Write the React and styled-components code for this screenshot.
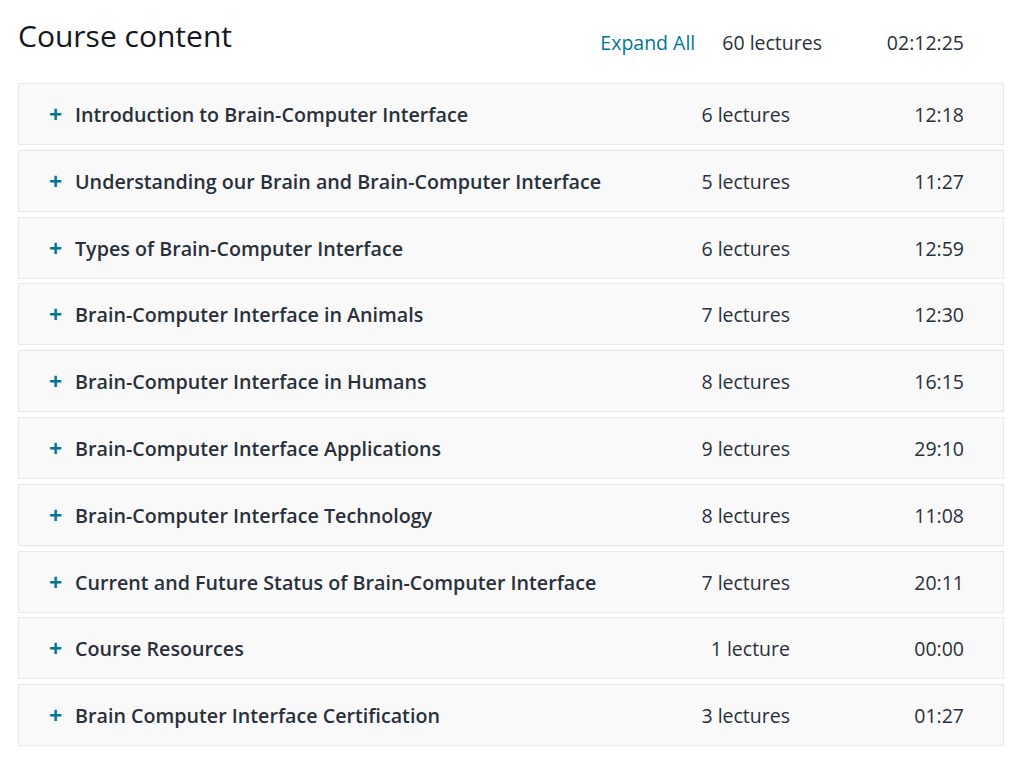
import React from 'react'
import styled, { createGlobalStyle } from 'styled-components'

const GlobalStyle = createGlobalStyle`
    body {
        margin: 0;
        background: #fff;
        font-family: "Open Sans", "Noto Sans", sans-serif;
        color: #29303b;
    }
`

const Page = styled.div`
    width: 986px;
    padding: 0 20px 0 18px;
`

const Header = styled.div`
    display: flex;
    align-items: flex-end;
    height: 83px;
    box-sizing: border-box;
    padding: 0 40px 27px 0;
`

const Title = styled.h2`
    margin: 0 auto 0 0;
    font-size: 30px;
    font-weight: 500;
    color: #14171c;
    line-height: 1;
    align-self: flex-start;
    padding-top: 21px;
`

const ExpandAll = styled.a`
    font-size: 19.5px;
    color: #007791;
    cursor: pointer;
    margin-right: 27px;
`

const Meta = styled.span`
    font-size: 19.5px;
    color: #29303b;
    text-align: right;
    width: ${props => props.width || 'auto'};
`

const List = styled.div`
    display: flex;
    flex-direction: column;
    gap: 4.8px;
`

const Row = styled.div`
    display: grid;
    grid-template-columns: 1fr auto 174px;
    align-items: center;
    height: 62px;
    box-sizing: border-box;
    background: #f9f9f9;
    border: 1px solid #e8e9eb;
    padding: 1px 39px 0 30px;
    cursor: pointer;
`

const Name = styled.div`
    display: flex;
    align-items: center;
    gap: 13px;
    font-size: 19.7px;
    font-weight: 600;
    color: #29303b;
`

const Plus = styled.span`
    color: #007791;
    font-size: 23px;
    font-weight: 700;
    width: 13px;
    line-height: 1;
    text-align: center;
`

const Cell = styled.div`
    font-size: 19.5px;
    color: #29303b;
    text-align: right;
`

const sections = [
    ['Introduction to Brain-Computer Interface', '6 lectures', '12:18'],
    ['Understanding our Brain and Brain-Computer Interface', '5 lectures', '11:27'],
    ['Types of Brain-Computer Interface', '6 lectures', '12:59'],
    ['Brain-Computer Interface in Animals', '7 lectures', '12:30'],
    ['Brain-Computer Interface in Humans', '8 lectures', '16:15'],
    ['Brain-Computer Interface Applications', '9 lectures', '29:10'],
    ['Brain-Computer Interface Technology', '8 lectures', '11:08'],
    ['Current and Future Status of Brain-Computer Interface', '7 lectures', '20:11'],
    ['Course Resources', '1 lecture', '00:00'],
    ['Brain Computer Interface Certification', '3 lectures', '01:27'],
]

export default function App() {
    return (
        <Page>
            <GlobalStyle />
            <Header>
                <Title>Course content</Title>
                <ExpandAll>Expand All</ExpandAll>
                <Meta>60 lectures</Meta>
                <Meta width='142px'>02:12:25</Meta>
            </Header>
            <List>
                {sections.map(([name, lectures, time]) => (
                    <Row key={name}>
                        <Name><Plus>+</Plus>{name}</Name>
                        <Cell>{lectures}</Cell>
                        <Cell>{time}</Cell>
                    </Row>
                ))}
            </List>
        </Page>
    )
}
